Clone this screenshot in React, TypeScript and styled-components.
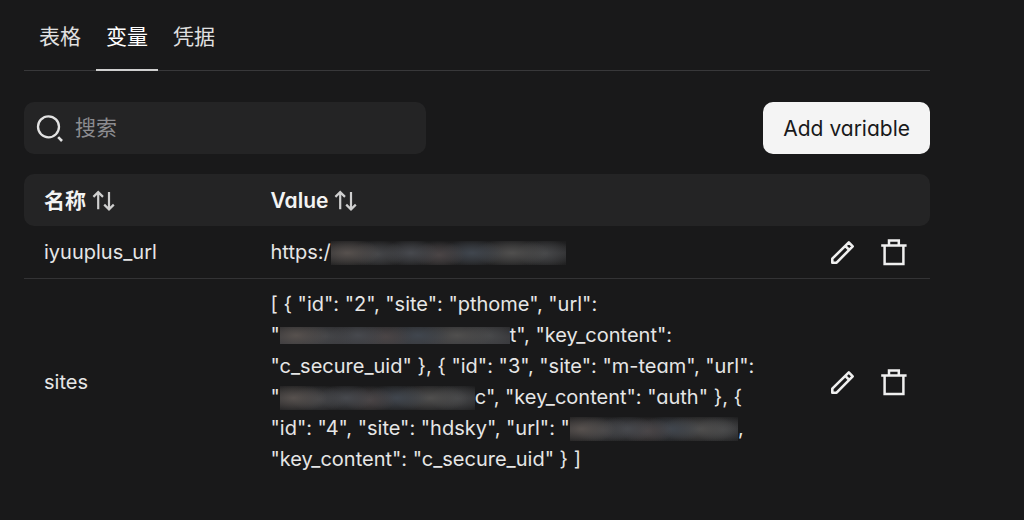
import React from "react";
import styled, { createGlobalStyle } from "styled-components";

const Global = createGlobalStyle`
  *, *::before, *::after { box-sizing: border-box; }
  body {
    margin: 0;
    background: #19191a;
    color: #e6e6e6;
    font-family: Inter, "Noto Sans CJK SC", sans-serif;
    font-feature-settings: "cv11" 1;
    font-size: 20px;
    line-height: 31px;
  }
  button, input { font: inherit; font-feature-settings: inherit; color: inherit; }
`;

const Page = styled.main`
  padding: 12px 94px 32px 24px;
`;

const Tabs = styled.nav`
  display: flex;
  gap: 5px;
  padding: 0 5px;
  height: 59px;
  border-bottom: 1px solid #38383a;
`;

const Tab = styled.button<{ $active?: boolean }>`
  height: 59px;
  padding: 0 10px 8px;
  border: 0;
  border-bottom: 2px solid ${(p) => (p.$active ? "#cfcfcf" : "transparent")};
  background: none;
  font-size: 21px;
  color: ${(p) => (p.$active ? "#ffffff" : "#e0e0e0")};
`;

const Toolbar = styled.div`
  display: flex;
  justify-content: space-between;
  align-items: center;
  margin: 31px 0 20px;
`;

const SearchBox = styled.label`
  display: flex;
  align-items: center;
  gap: 11px;
  flex: 0 1 402px;
  height: 52px;
  padding: 0 12px;
  border-radius: 10px;
  background: #242425;
`;

const SearchInput = styled.input`
  flex: 1;
  min-width: 0;
  padding: 0 0 2px;
  border: 0;
  outline: 0;
  background: none;
  font-size: 21px;
  &::placeholder { color: #8c8c90; opacity: 1; }
`;

const AddButton = styled.button`
  height: 52px;
  padding: 0 20px;
  border: 0;
  border-radius: 10px;
  background: #f4f4f4;
  color: #19191a;
  font-size: 21px;
`;

const Table = styled.table`
  width: 100%;
  table-layout: fixed;
  border-collapse: separate;
  border-spacing: 0;
`;

const HeadCell = styled.th<{ $width: string }>`
  width: ${(p) => p.$width};
  height: 52px;
  padding: 0 20px;
  background: #242425;
  text-align: left;
  font-weight: 600;
  &:first-child { border-radius: 10px 0 0 10px; }
  &:last-child { border-radius: 0 10px 10px 0; }
`;

const SortButton = styled.button`
  display: flex;
  align-items: center;
  gap: 5px;
  padding: 0;
  border: 0;
  background: none;
  font-size: 21px;
  font-weight: 600;
  color: #f3f3f3;
`;

const Row = styled.tr`
  &:not(:last-child) > td { border-bottom: 1px solid #333335; }
`;

const Cell = styled.td`
  padding: 10px 20px;
  white-space: nowrap;
`;

const ActionCell = styled.td`
  padding: 0 10px;
`;

const Actions = styled.div`
  display: flex;
  justify-content: flex-end;
`;

const IconButton = styled.button`
  display: grid;
  place-items: center;
  width: 52px;
  height: 52px;
  padding: 0;
  border: 0;
  background: none;
`;

const Masked = styled.span<{ $width: number; $tall?: boolean }>`
  display: inline-block;
  width: ${(p) => p.$width}px;
  height: ${(p) => (p.$tall ? 24 : 17)}px;
  vertical-align: ${(p) => (p.$tall ? "-6px" : "-2px")};
  background:
    radial-gradient(ellipse 34px 15px at 7% 50%, #57514e, transparent),
    radial-gradient(ellipse 28px 14px at 20% 55%, #454649, transparent),
    radial-gradient(ellipse 28px 14px at 34% 50%, #47494e, transparent),
    radial-gradient(ellipse 26px 14px at 46% 58%, #4b4546, transparent),
    radial-gradient(ellipse 32px 14px at 60% 50%, #40464e, transparent),
    radial-gradient(ellipse 38px 15px at 77% 50%, #504f4e, transparent),
    radial-gradient(ellipse 28px 15px at 91% 52%, #47484a, transparent),
    ${(p) =>
      p.$tall
        ? "linear-gradient(#1c1c1d, #303032 50%, #202021)"
        : "linear-gradient(#29292b, #38383b 60%, #38383c)"};
`;

const SearchIcon = () => (
  <svg width="28" height="28" viewBox="0 0 28 28" fill="none" stroke="#e2e2e2" strokeWidth="2.3" aria-hidden="true">
    <circle cx="12.5" cy="12.8" r="10.5" />
    <path d="M22.2 23.2 26 27" strokeWidth="2.6" />
  </svg>
);

const SortIcon = () => (
  <svg width="24" height="24" viewBox="0 0 24 24" fill="none" stroke="#cfcfcf" strokeWidth="2.2" aria-hidden="true">
    <path d="M7.2 21.3V4.5M2.4 8.9 7.2 4.1 12 8.9M18 4V20.8M13.2 16.6 18 21.4 22.8 16.6" />
  </svg>
);

const EditIcon = () => (
  <svg width="28" height="28" viewBox="0 0 28 28" fill="none" stroke="#efefef" strokeWidth="2.6" strokeLinejoin="round" aria-hidden="true">
    <path d="M4.3 24.7V20.7L20.8 4.4 24.7 8.3 8.6 24.7ZM17.2 7.8 21.2 11.8" />
  </svg>
);

const TrashIcon = () => (
  <svg width="28" height="28" viewBox="0 0 28 28" fill="none" stroke="#efefef" strokeWidth="2.5" aria-hidden="true">
    <path d="M1.2 7.6H26.6M4.6 7.6V26.1H23.4V7.6M9 7.6V2.4H18.8V7.6" />
  </svg>
);

const Sort = ({ children }: { children: React.ReactNode }) => (
  <SortButton type="button">
    {children}
    <SortIcon />
  </SortButton>
);

const RowActions = ({ name }: { name: string }) => (
  <Actions>
    <IconButton type="button" aria-label={`Edit ${name}`}><EditIcon /></IconButton>
    <IconButton type="button" aria-label={`Delete ${name}`}><TrashIcon /></IconButton>
  </Actions>
);

export default function App() {
  return (
    <Page>
      <Global />
      <Tabs>
        <Tab type="button">表格</Tab>
        <Tab type="button" $active>变量</Tab>
        <Tab type="button">凭据</Tab>
      </Tabs>
      <Toolbar>
        <SearchBox>
          <SearchIcon />
          <SearchInput type="text" placeholder="搜索" aria-label="搜索" />
        </SearchBox>
        <AddButton type="button">Add variable</AddButton>
      </Toolbar>
      <Table>
        <thead>
          <tr>
            <HeadCell $width="25%"><Sort>名称</Sort></HeadCell>
            <HeadCell $width="58%"><Sort>Value</Sort></HeadCell>
            <HeadCell $width="17%" aria-label="Actions" />
          </tr>
        </thead>
        <tbody>
          <Row>
            <Cell>iyuuplus_url</Cell>
            <Cell>https:/<Masked $width={235} $tall /></Cell>
            <ActionCell><RowActions name="iyuuplus_url" /></ActionCell>
          </Row>
          <Row>
            <Cell>sites</Cell>
            <Cell>
              [ {"{"} "id": "2", "site": "pthome", "url":<br />
              "<Masked $width={230} />t", "key_content":<br />
              "c_secure_uid" {"}"}, {"{"} "id": "3", "site": "m-team", "url":<br />
              "<Masked $width={195} $tall />c", "key_content": "auth" {"}"}, {"{"}<br />
              "id": "4", "site": "hdsky", "url": "<Masked $width={168} $tall />,<br />
              "key_content": "c_secure_uid" {"}"} ]
            </Cell>
            <ActionCell><RowActions name="sites" /></ActionCell>
          </Row>
        </tbody>
      </Table>
    </Page>
  );
}
